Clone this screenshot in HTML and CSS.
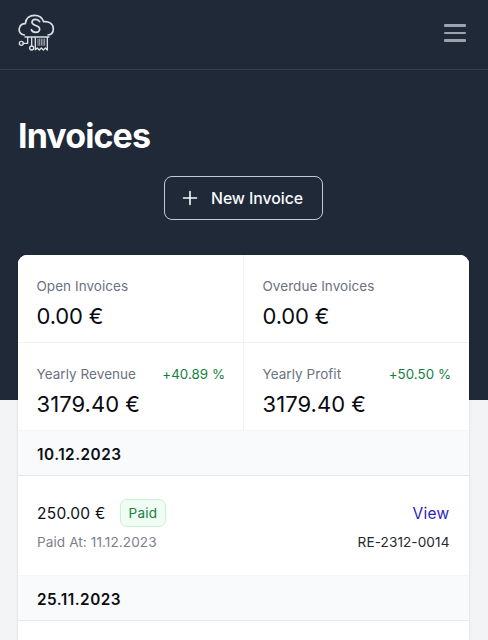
FILE: index.html
```html
<!DOCTYPE html>
<html lang="en">
<head>
<meta charset="utf-8">
<meta name="viewport" content="width=device-width, initial-scale=1">
<title>Invoices</title>
<link rel="stylesheet" href="styles.css">
</head>
<body>
<div class="hero">
  <nav class="nav">
    <svg class="logo" viewBox="24 21 111 117" fill="none" stroke="currentColor" stroke-width="5" stroke-linecap="round" stroke-linejoin="round">
      <path d="M43 87C31 85 26 77 28 67c2-9 9-14 18-14C47 37 59 28 74 28c13 0 23 7 27 19 16-2 29 7 29 21 0 11-7 18-16 19"/>
      <path d="M89 47c-3-5-7-7-12-7-7 0-11 4-11 9 0 12 23 7 23 20 0 6-5 10-12 10-6 0-11-3-13-8"/>
      <path stroke-width="4" d="M45 93h72M53 94v18H39M65 94v25M76 94v37l6-5 6 6 6-6 6 6 6-6 6 6V94"/>
      <path stroke-width="3" opacity=".7" d="M84 99v19M89 99v19M94 99v19M99 99v19M104 99v19"/>
      <circle cx="34" cy="112" r="6" stroke-width="4"/>
      <circle cx="65" cy="126" r="6" stroke-width="4"/>
    </svg>
    <button class="menu" aria-label="Menu"><span></span><span></span><span></span></button>
  </nav>
  <header class="heading">
    <h1>Invoices</h1>
    <button class="new">
      <svg viewBox="0 0 16 16" stroke="currentColor" stroke-width="1.6" stroke-linecap="round"><path d="M8 1.5v13M1.5 8h13"/></svg>
      <span>New Invoice</span>
    </button>
  </header>
</div>
<main class="card">
  <section class="stats">
    <div class="stat"><div class="label"><span>Open Invoices</span></div><div class="value">0.00 €</div></div>
    <div class="stat"><div class="label"><span>Overdue Invoices</span></div><div class="value">0.00 €</div></div>
    <div class="stat"><div class="label"><span>Yearly Revenue</span><span class="change">+40.89 %</span></div><div class="value long">3179.40 €</div></div>
    <div class="stat"><div class="label"><span>Yearly Profit</span><span class="change">+50.50 %</span></div><div class="value long">3179.40 €</div></div>
  </section>
  <h2 class="date">10.12.2023</h2>
  <div class="invoice">
    <div>
      <div class="line"><span class="amount">250.00 €</span><span class="badge">Paid</span></div>
      <div class="meta">Paid At: 11.12.2023</div>
    </div>
    <div class="right">
      <div class="line"><a class="view">View</a></div>
      <div class="meta number">RE-2312-0014</div>
    </div>
  </div>
  <h2 class="date">25.11.2023</h2>
</main>
</body>
</html>
```
FILE: styles.css
```css
* { box-sizing: border-box; }
body { display: flex; flex-direction: column; margin: 0; height: 100vh; overflow: hidden; background: #f3f4f6; color: #0b0d14; font-family: Inter, "Liberation Sans", sans-serif; }
button { font: inherit; background: none; cursor: pointer; }
.hero { flex: none; height: 399.5px; background: #1f2937; color: #fff; }
.nav { display: flex; justify-content: space-between; height: 70px; padding: 13px 22px 0 18px; border-bottom: 1px solid #354050; }
.logo { width: 37px; height: 39px; color: #dcdfe5; }
.menu { display: flex; flex-direction: column; justify-content: space-between; width: 22px; height: 18px; margin-top: 11px; padding: 0; border: 0; }
.menu span { height: 2.7px; border-radius: 1px; background: #9ca3af; }
.heading { display: flex; flex-direction: column; padding: 45px 18px 0; }
h1 { margin: 0; font-size: 34px; line-height: 41px; font-weight: 700; letter-spacing: -.9px; }
.new { display: flex; align-items: center; align-self: center; width: 159px; height: 44px; margin: 20px 1px 0 0; padding: 0 17px; gap: 13px; border: 1.5px solid #c5c8d0; border-radius: 8px; color: #f9fafb; font-size: 15.8px; font-weight: 500; letter-spacing: -.05px; white-space: nowrap; }
.new svg { width: 16px; height: 16px; flex: none; }
.card { position: relative; flex: 1; margin: -145px 19px 0 18px; background: #fff; border-radius: 9px 9px 0 0; overflow: hidden; box-shadow: 0 1px 3px rgba(0,0,0,.12); }
.stats { display: grid; grid-template-columns: 225px 1fr; grid-template-rows: 87.5px 87px; gap: 1px; background: #f1f2f4; }
.stat { padding: 21px 18px 0 18.5px; background: #fff; }
.label { display: flex; justify-content: space-between; font-size: 13.5px; line-height: 20px; letter-spacing: .05px; color: #6b7280; }
.change { color: #15803d; font-size: 13.3px; }
.value { margin-top: 3px; font-size: 22px; line-height: 34px; letter-spacing: -.15px; color: #090b12; }
.value.long { margin-top: 2.5px; letter-spacing: .05px; }
.date { display: flex; align-items: center; height: 46px; margin: 0; padding: 2px 19px 0; background: #f9fafb; border-top: 1px solid #f5f6f8; border-bottom: 1px solid #e5e7eb; font-size: 15.3px; font-weight: 600; letter-spacing: .5px; }
.invoice { display: flex; justify-content: space-between; height: 99px; padding: 22.5px 19.5px 0 19px; }
.line { display: flex; align-items: center; height: 28px; gap: 14px; font-size: 15.5px; letter-spacing: .25px; }
.amount, .view { padding-top: 1px; }
.badge { display: flex; align-items: center; height: 28px; padding: 0 8px; border: 1px solid #c9efd5; border-radius: 7px; background: #f0fdf4; color: #15803d; font-size: 13.5px; }
.meta { margin-top: 5px; font-size: 13.6px; line-height: 20px; letter-spacing: .08px; color: #7b818c; }
.right { text-align: right; }
.right .line { justify-content: flex-end; }
.view { color: #2b1fc0; }
.number { color: #252830; }
```
